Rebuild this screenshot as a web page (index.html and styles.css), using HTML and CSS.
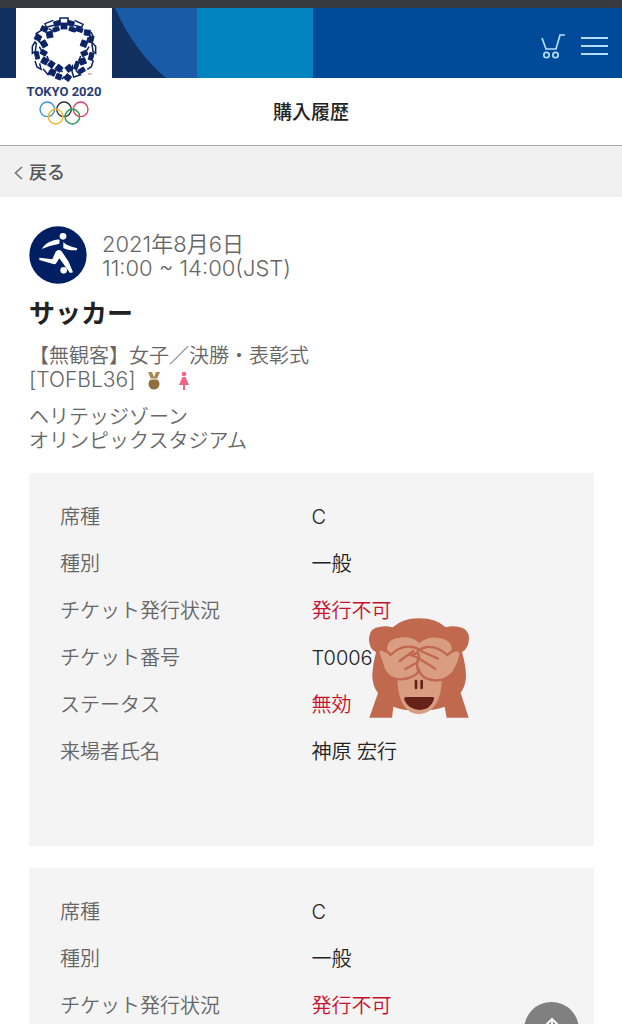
FILE: index.html
```html
<!DOCTYPE html>
<html lang="ja">
<head>
<meta charset="utf-8">
<meta name="viewport" content="width=device-width, initial-scale=1">
<title>購入履歴</title>
<link rel="stylesheet" href="styles.css">
</head>
<body>
<div class="page">
  <header class="site-header">
    <svg class="banner" viewBox="0 0 313 70" aria-hidden="true">
      <rect width="313" height="70" fill="#12305f"/>
      <path d="M115 0H198V70H166Q134 43 115 0Z" fill="#195ba6"/>
      <rect x="197" width="116" height="70" fill="#0083be"/>
    </svg>
    <a class="brand" href="#" aria-label="TOKYO 2020">
      <svg class="emblem" viewBox="82 42 216 204" aria-hidden="true">
        <g fill="#0b2265" stroke="#0b2265" stroke-width="2.500">
          <rect x="181" y="69" width="18" height="18"/>
          <rect x="160" y="63" width="20" height="14" transform="rotate(-15 170 70)"/>
          <rect x="200" y="63" width="20" height="14" transform="rotate(15 210 70)"/>
          <rect x="157" y="82" width="18" height="12" transform="rotate(-18 166 87)"/>
          <rect x="206" y="82" width="18" height="12" transform="rotate(18 215 87)"/>
          <rect x="138" y="95" width="18" height="18" transform="rotate(-10 147 104)"/>
          <rect x="121" y="80" width="19" height="14" transform="rotate(25 130 87)"/>
          <rect x="103" y="105" width="18" height="16" transform="rotate(25 112 113)"/>
          <rect x="121" y="122" width="17" height="19" transform="rotate(-30 130 131)"/>
          <rect x="226" y="83" width="20" height="12" transform="rotate(20 236 89)"/>
          <rect x="251" y="90" width="18" height="16" transform="rotate(5 260 98)"/>
          <rect x="264" y="108" width="14" height="20" transform="rotate(15 271 118)"/>
          <rect x="241" y="122" width="18" height="18" transform="rotate(20 250 131)"/>
          <rect x="103" y="155" width="12" height="22" transform="rotate(-12 109 166)"/>
          <rect x="120" y="151" width="18" height="14" transform="rotate(30 129 158)"/>
          <rect x="123" y="174" width="18" height="18" transform="rotate(28 132 183)"/>
          <rect x="144" y="184" width="16" height="18" transform="rotate(35 152 193)"/>
          <rect x="147" y="208" width="17" height="18" transform="rotate(22 155 217)"/>
          <rect x="166" y="196" width="18" height="18" transform="rotate(38 175 205)"/>
          <rect x="196" y="196" width="18" height="18" transform="rotate(52 205 205)"/>
          <rect x="166" y="222" width="16" height="16" transform="rotate(20 174 230)"/>
          <rect x="193" y="224" width="17" height="17" transform="rotate(35 201 232)"/>
          <rect x="242" y="153" width="18" height="14" transform="rotate(-25 251 160)"/>
          <rect x="265" y="158" width="13" height="22" transform="rotate(14 271 169)"/>
          <rect x="237" y="175" width="18" height="18" transform="rotate(-20 246 184)"/>
          <rect x="222" y="184" width="11" height="24" transform="rotate(20 227 196)"/>
          <rect x="234" y="205" width="19" height="13" transform="rotate(-30 243 212)"/>
        </g>
        <g fill="none" stroke="#0b2265" stroke-width="4.500">
          <path d="M178 64V54H202V64M158 61L133 71 137 82 160 76M222 61L247 73 243 82 221 76M122 91L107 100 116 107M271 96L279 111M103 126L95 139V160L104 154 107 132ZM276 130L285 139V160L277 154 274 132ZM116 140L122 152M265 140L258 152M103 183L109 201 121 208 117 190M278 181L272 200 260 208M127 206L142 224 148 211M212 207L219 231 239 225 225 211M185 217L180 205M183 238L192 229M216 194L214 214M144 86L158 94M236 81L223 95M113 122L122 130M263 111L259 125M139 168L145 184M240 168L234 184"/>
        </g>
        <path d="M262 222H273" stroke="#b06c83" stroke-width="3"/>
      </svg>
      <span class="brand-name">TOKYO 2020</span>
      <svg class="rings" viewBox="0 0 48 24" fill="none" stroke-width="1.4" aria-hidden="true">
        <circle cx="8" cy="8" r="7" stroke="#3b97d3"/>
        <circle cx="24" cy="8" r="7" stroke="#333"/>
        <circle cx="40" cy="8" r="7" stroke="#e04460"/>
        <circle cx="16" cy="15" r="7" stroke="#f2b838"/>
        <circle cx="32" cy="15" r="7" stroke="#2c9d5b"/>
      </svg>
    </a>
    <nav class="tools">
      <button type="button" aria-label="カート">
        <svg width="26" height="26" viewBox="0 0 26 26" fill="none" stroke="#b6dcff" stroke-width="1.7" aria-hidden="true"><path d="M2 5L6 16H16L20 2H25"/><circle cx="6.500" cy="22" r="2.700"/><circle cx="15.500" cy="22" r="2.700"/></svg>
      </button>
      <button type="button" aria-label="メニュー">
        <svg width="27" height="20" viewBox="0 0 27 20" stroke="#b6dcff" stroke-width="2" aria-hidden="true"><path d="M0 2H27M0 10H27M0 18H27"/></svg>
      </button>
    </nav>
  </header>
  <h1 class="title">購入履歴</h1>
  <div class="back-bar">
    <a class="back" href="#"><svg width="9" height="14" viewBox="0 0 9 14" fill="none" stroke="#777" stroke-width="1.7" aria-hidden="true"><path d="M8 1L1.500 7 8 13"/></svg>戻る</a>
  </div>
  <main class="content">
    <div class="schedule">
      <svg class="sport" viewBox="0 0 174 174" aria-hidden="true">
        <circle cx="87" cy="87" r="86" fill="#001f62"/>
        <g fill="#fff">
          <circle cx="102" cy="31" r="10"/>
          <circle cx="104" cy="133" r="10"/>
          <path d="M38 69Q48 53 67 46Q80 39 92 41L91 53Q67 57 38 69ZM103 48Q113 60 145 67L143 73Q116 74 103 66ZM31 95L70 100 80 77Q88 67 98 76L119 107 132 139 123 141 91 97 82 111Q79 116 73 114L31 102Z"/>
        </g>
      </svg>
      <p class="when">2021年8月6日<br>11:00 ~ 14:00(JST)</p>
    </div>
    <h2>サッカー</h2>
    <p class="event">【無観客】女子／決勝・表彰式<br><span class="code">[TOFBL36]</span>
      <svg class="mark medal" width="14" height="20" viewBox="0 0 14 20" aria-label="メダル種目"><path d="M1 1H5L7 6 9 1H13L10 8H4Z" fill="#a98a55"/><circle cx="7" cy="13" r="5.500" fill="#92703e"/><path d="M4 8H10" stroke="#fff"/></svg>
      <svg class="mark woman" width="10" height="20" viewBox="0 0 10 20" fill="#ee6680" aria-label="女子"><circle cx="5" cy="3" r="2.300"/><path d="M3.500 6H6.500L10 14H6V19H4V14H0Z"/></svg>
    </p>
    <p class="venue">ヘリテッジゾーン<br>オリンピックスタジアム</p>
    <dl class="ticket">
      <dt>席種</dt><dd>C</dd>
      <dt>種別</dt><dd>一般</dd>
      <dt>チケット発行状況</dt><dd class="alert">発行不可</dd>
      <dt>チケット番号</dt><dd class="number">T0006
        <svg class="monkey" viewBox="57 52 300 300" aria-hidden="true">
          <path d="M58 351L84 277Q65 253 67 218Q70 185 78 155Q56 145 57 112Q59 80 91 78Q108 75 128 80Q160 52 208 53Q259 53 287 80Q304 75 324 78Q358 82 357 116Q355 144 336 155Q348 194 348 230Q346 257 332 277L356 351H290L284 318Q253 330 208 330Q162 331 130 318L126 351Z" fill="#c1694f"/>
          <path d="M112 157Q105 114 150 111Q186 106 208 128Q232 106 265 112Q310 117 305 157L276 232Q273 335 208 341Q145 337 142 234Z" fill="#d99e82"/>
          <g fill="#d99e82" stroke="#c1694f" stroke-width="7" stroke-linecap="round">
            <path d="M122 163Q151 133 187 139Q211 144 209 153L184 164Q214 172 214 182Q212 193 202 201Q211 217 190 226Q163 241 134 234Q103 225 96 187L84 154Q89 143 98 148Q111 150 122 163Z"/>
            <path d="M292 163Q262 136 230 139Q205 145 202 154Q212 170 204 177Q197 190 205 204Q211 226 231 234Q279 251 310 215Q331 180 332 155Q324 145 316 149Q302 152 292 163Z"/>
            <path d="M190 151L149 181M205 183L166 205M213 151L264 174M208 174L256 204" fill="none"/>
          </g>
          <path d="M198 241V262M215 241V262" stroke="#66211b" stroke-width="8" stroke-linecap="round"/>
          <path d="M168 289H247Q255 289 251 299Q240 328 208 328Q175 326 163 298Q161 290 168 289Z" fill="#66211b"/>
        </svg>
      </dd>
      <dt>ステータス</dt><dd class="alert">無効</dd>
      <dt>来場者氏名</dt><dd>神原 宏行</dd>
    </dl>
    <dl class="ticket">
      <dt>席種</dt><dd>C</dd>
      <dt>種別</dt><dd>一般</dd>
      <dt>チケット発行状況</dt><dd class="alert">発行不可</dd>
    </dl>
  </main>
  <button class="to-top" type="button" aria-label="ページの先頭へ">
    <svg width="16" height="24" viewBox="0 0 16 24" fill="none" stroke="#fff" stroke-width="2" aria-hidden="true"><path d="M8 24V2M2 8L8 2 14 8"/></svg>
  </button>
</div>
</body>
</html>
```
FILE: styles.css
```css
* { box-sizing: border-box; }
body, h1, h2, p, dl, dd { margin: 0; }
body {
  background: #fff;
  color: #666;
  font-family: Inter, "Noto Sans CJK JP", sans-serif;
  font-size: 20px;
  font-weight: 350;
  line-height: 24px;
}
button { border: 0; padding: 0; background: none; }
svg { display: block; }
.page { height: 100vh; overflow: hidden; border-top: 8px solid #36393e; }
.site-header {
  position: relative;
  display: flex;
  justify-content: flex-end;
  height: 70px;
  background: #004b99;
}
.banner { height: 70px; margin-right: auto; }
.brand {
  position: absolute;
  top: 0;
  left: 16px;
  width: 96px;
  height: 120px;
  padding-top: 6px;
  display: flex;
  flex-direction: column;
  align-items: center;
  background: #fff;
  text-decoration: none;
}
.emblem { width: 72px; height: 68px; }
.brand-name {
  margin-top: 2px;
  color: #293b75;
  font: 700 13px/16px Roboto, sans-serif;
  white-space: nowrap;
}
.rings { width: 50px; height: 25px; margin-top: 1px; }
.tools { display: flex; align-items: center; gap: 15px; padding: 6px 14px 0 0; }
.title {
  padding: 23px 0 20px;
  border-bottom: 1px solid #aaa;
  color: #222;
  font-size: 19px;
  font-weight: 500;
  text-align: center;
}
.back-bar { padding: 15px 14px 12px; background: #f1f1f1; }
.back {
  display: flex;
  align-items: center;
  gap: 6px;
  color: #555;
  font-size: 18px;
  font-weight: 500;
  text-decoration: none;
}
.content { padding: 29px 28px 0 29px; }
.schedule { display: flex; align-items: center; gap: 15px; }
.sport { width: 58px; height: 58px; }
.when { padding-top: 2px; font-size: 22px; }
.code { font-size: 21px; }
h2 { margin-top: 13px; color: #222; font-size: 26px; font-weight: 700; line-height: 34px; }
.event { margin-top: 13px; }
.mark { display: inline-block; vertical-align: -4px; }
.medal { margin-left: 6px; }
.woman { margin-left: 12px; }
.venue { margin-top: 13px; }
.ticket {
  display: grid;
  grid-template-columns: 1fr 1fr;
  row-gap: 23px;
  margin-top: 20px;
  padding: 32px 31px;
  background: #f4f4f4;
}
.ticket:nth-of-type(1) { padding-bottom: 82px; }
.ticket + .ticket { margin-top: 22px; }
dd { color: #222; }
.alert { color: #c8102e; }
.number { position: relative; }
.monkey { position: absolute; top: -28px; left: 57px; width: 100px; height: 100px; }
.to-top {
  position: fixed;
  right: 43px;
  bottom: -33px;
  display: flex;
  justify-content: center;
  width: 55px;
  height: 55px;
  padding-top: 15px;
  border-radius: 50%;
  background: #808080;
}
```
